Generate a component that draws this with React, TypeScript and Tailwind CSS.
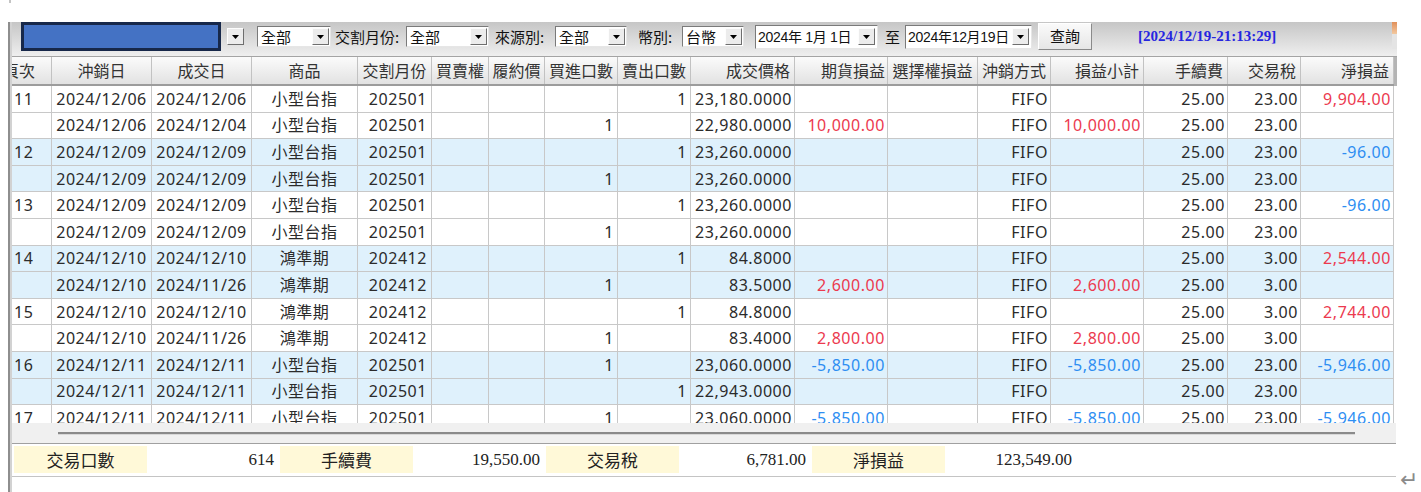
import React from 'react';

const COLS =
  'grid grid-cols-[40px_100px_100px_106px_74px_57px_56px_73px_73px_104px_93px_90px_73px_93px_84px_73px_93px]';

type Cell = { t: string; c?: 'r' | 'b' };
const R = (t: string): Cell => ({ t, c: 'r' });
const B = (t: string): Cell => ({ t, c: 'b' });
const N = (t: string): Cell => ({ t });

type Row = Cell[];

const rows: Row[] = [
  [N('11'), N('2024/12/06'), N('2024/12/06'), N('小型台指'), N('202501'), N(''), N(''), N(''), N('1'), N('23,180.0000'), N(''), N(''), N('FIFO'), N(''), N('25.00'), N('23.00'), R('9,904.00')],
  [N(''), N('2024/12/06'), N('2024/12/04'), N('小型台指'), N('202501'), N(''), N(''), N('1'), N(''), N('22,980.0000'), R('10,000.00'), N(''), N('FIFO'), R('10,000.00'), N('25.00'), N('23.00'), N('')],
  [N('12'), N('2024/12/09'), N('2024/12/09'), N('小型台指'), N('202501'), N(''), N(''), N(''), N('1'), N('23,260.0000'), N(''), N(''), N('FIFO'), N(''), N('25.00'), N('23.00'), B('-96.00')],
  [N(''), N('2024/12/09'), N('2024/12/09'), N('小型台指'), N('202501'), N(''), N(''), N('1'), N(''), N('23,260.0000'), N(''), N(''), N('FIFO'), N(''), N('25.00'), N('23.00'), N('')],
  [N('13'), N('2024/12/09'), N('2024/12/09'), N('小型台指'), N('202501'), N(''), N(''), N(''), N('1'), N('23,260.0000'), N(''), N(''), N('FIFO'), N(''), N('25.00'), N('23.00'), B('-96.00')],
  [N(''), N('2024/12/09'), N('2024/12/09'), N('小型台指'), N('202501'), N(''), N(''), N('1'), N(''), N('23,260.0000'), N(''), N(''), N('FIFO'), N(''), N('25.00'), N('23.00'), N('')],
  [N('14'), N('2024/12/10'), N('2024/12/10'), N('鴻準期'), N('202412'), N(''), N(''), N(''), N('1'), N('84.8000'), N(''), N(''), N('FIFO'), N(''), N('25.00'), N('3.00'), R('2,544.00')],
  [N(''), N('2024/12/10'), N('2024/11/26'), N('鴻準期'), N('202412'), N(''), N(''), N('1'), N(''), N('83.5000'), R('2,600.00'), N(''), N('FIFO'), R('2,600.00'), N('25.00'), N('3.00'), N('')],
  [N('15'), N('2024/12/10'), N('2024/12/10'), N('鴻準期'), N('202412'), N(''), N(''), N(''), N('1'), N('84.8000'), N(''), N(''), N('FIFO'), N(''), N('25.00'), N('3.00'), R('2,744.00')],
  [N(''), N('2024/12/10'), N('2024/11/26'), N('鴻準期'), N('202412'), N(''), N(''), N('1'), N(''), N('83.4000'), R('2,800.00'), N(''), N('FIFO'), R('2,800.00'), N('25.00'), N('3.00'), N('')],
  [N('16'), N('2024/12/11'), N('2024/12/11'), N('小型台指'), N('202501'), N(''), N(''), N('1'), N(''), N('23,060.0000'), B('-5,850.00'), N(''), N('FIFO'), B('-5,850.00'), N('25.00'), N('23.00'), B('-5,946.00')],
  [N(''), N('2024/12/11'), N('2024/12/11'), N('小型台指'), N('202501'), N(''), N(''), N(''), N('1'), N('22,943.0000'), N(''), N(''), N('FIFO'), N(''), N('25.00'), N('23.00'), N('')],
  [N('17'), N('2024/12/11'), N('2024/12/11'), N('小型台指'), N('202501'), N(''), N(''), N('1'), N(''), N('23,060.0000'), B('-5,850.00'), N(''), N('FIFO'), B('-5,850.00'), N('25.00'), N('23.00'), B('-5,946.00')],
];

const dataAlign = [
  'justify-start pl-[2px]',
  'justify-center',
  'justify-center',
  'justify-center',
  'justify-end pr-[4px]',
  'justify-end pr-[3px]',
  'justify-end pr-[3px]',
  'justify-end pr-[3px]',
  'justify-end pr-[3px]',
  'justify-end pr-[2px]',
  'justify-end pr-[2px]',
  'justify-end pr-[2px]',
  'justify-end pr-[2px]',
  'justify-end pr-[2px]',
  'justify-end pr-[2px]',
  'justify-end pr-[2px]',
  'justify-end pr-[2px]',
];

const headers: { t: string; a: string }[] = [
  { t: '頁次', a: 'justify-start' },
  { t: '沖銷日', a: 'justify-center' },
  { t: '成交日', a: 'justify-center' },
  { t: '商品', a: 'justify-center' },
  { t: '交割月份', a: 'justify-center' },
  { t: '買賣權', a: 'justify-center' },
  { t: '履約價', a: 'justify-center' },
  { t: '買進口數', a: 'justify-center' },
  { t: '賣出口數', a: 'justify-center' },
  { t: '成交價格', a: 'justify-end pr-[4px]' },
  { t: '期貨損益', a: 'justify-end pr-[2px]' },
  { t: '選擇權損益', a: 'justify-center' },
  { t: '沖銷方式', a: 'justify-center' },
  { t: '損益小計', a: 'justify-end pr-[4px]' },
  { t: '手續費', a: 'justify-end pr-[4px]' },
  { t: '交易稅', a: 'justify-end pr-[4px]' },
  { t: '淨損益', a: 'justify-end pr-[4px]' },
];

const Arrow = () => (
  <svg width="7" height="4" viewBox="0 0 7 4">
    <path d="M0 0H7L3.5 4Z" fill="#000" />
  </svg>
);

const DropBtn = () => (
  <div className="flex h-[17px] w-[17px] items-center justify-center border border-b-[#6e6e6e] border-l-[#fdfdfd] border-r-[#6e6e6e] border-t-[#fdfdfd] bg-[#ececec]">
    <Arrow />
  </div>
);

function Select({ w, text }: { w: string; text: string }) {
  return (
    <div
      className={`flex h-[21px] items-center justify-between border border-b-[#e6e6e6] border-l-[#7a7a7a] border-r-[#e6e6e6] border-t-[#7a7a7a] bg-white pl-[3px] pr-[1px] ${w}`}
    >
      <span className="text-[15px] leading-none text-[#111]">{text}</span>
      <DropBtn />
    </div>
  );
}

function DateBox({ w, text }: { w: string; text: string }) {
  return (
    <div
      className={`flex h-[24px] items-center justify-between border border-b-[#e6e6e6] border-l-[#7a7a7a] border-r-[#e6e6e6] border-t-[#7a7a7a] bg-white pl-[2px] pr-[2px] ${w}`}
    >
      <span
        className="whitespace-pre text-[14px] leading-none tracking-[-0.3px] text-[#111]"
        style={{ fontFamily: '"Liberation Sans", "Noto Sans CJK TC", sans-serif' }}
      >
        {text}
      </span>
      <DropBtn />
    </div>
  );
}

export default function App() {
  return (
    <div
      className="relative h-[492px] w-[1421px] overflow-hidden bg-white text-[#2b2b2b]"
      style={{ fontFamily: '"Noto Sans", "Noto Sans CJK TC", sans-serif' }}
    >
      <div className="h-[22px]">
        <div className="ml-[9px] h-[3px] w-[2px] bg-[#c4c4c4]" />
      </div>
      <div className="flex h-[470px]">
        <div className="w-[8px]" />
        <div className="flex w-[1389px]">
          <div className="w-[4px] border-l-2 border-[#8e8e8e] bg-[#d2d2d2]" />
          <div className="flex w-[1385px] flex-col">
            {/* Toolbar */}
            <div
              className="flex h-[35px] items-center border-b border-[#a4a4a4] bg-gradient-to-b from-[#c6c6c6] to-[#efefef] pb-[5px] pl-[9px]"
              style={{ fontFamily: '"Noto Sans CJK TC", sans-serif' }}
            >
              <div className="h-[29px] w-[200px] border-[3px] border-[#17284a] bg-[#4472c4]" />
              <div className="ml-[6px]">
                <DropBtn />
              </div>
              <div className="ml-[13px]">
                <Select w="w-[74px]" text="全部" />
              </div>
              <div className="w-[75px] pl-[4px] text-[15px] leading-none text-[#111]">交割月份:</div>
              <Select w="w-[83px]" text="全部" />
              <div className="w-[66px] pl-[6px] text-[15px] leading-none text-[#111]">來源別:</div>
              <Select w="w-[72px]" text="全部" />
              <div className="w-[55px] pl-[11px] text-[15px] leading-none text-[#111]">幣別:</div>
              <Select w="w-[62px]" text="台幣" />
              <div className="ml-[11px]">
                <DateBox w="w-[123px]" text="2024年 1月 1日" />
              </div>
              <div className="w-[27px] pl-[7px] text-[15px] leading-none text-[#111]">至</div>
              <DateBox w="w-[127px]" text="2024年12月19日" />
              <div className="ml-[6px] flex h-[27px] w-[54px] items-center justify-center border border-b-[#8a8a8a] border-l-[#ffffff] border-r-[#8a8a8a] border-t-[#ffffff] bg-gradient-to-b from-[#fafafa] to-[#e6e6e6] text-[15px] text-[#111]">
                查詢
              </div>
              <div
                className="ml-[46px] text-[15px] font-bold leading-none text-[#2626e0]"
                style={{ fontFamily: '"Liberation Serif", serif' }}
              >
                [2024/12/19-21:13:29]
              </div>
              <div className="ml-auto flex h-[27px] w-[5px] flex-col self-start">
                <div className="h-[12px] bg-gradient-to-b from-[#e0905a] to-[#f2c9a0]" />
                <div className="flex-1 bg-[#e4e4e4]" />
              </div>
            </div>

            {/* Header */}
            <div className="flex h-[29px]">
              <div className={`${COLS} h-[29px] w-[1382px] border-b-2 border-[#9c9c9c] bg-gradient-to-b from-[#fbfbfb] to-[#e2e2e2]`}>
                {headers.map((h, i) => (
                  <div
                    key={i}
                    className={`flex items-center overflow-hidden whitespace-nowrap border-r border-[#c2c2c2] text-[16px] leading-none text-[#333] ${h.a}`}
                  >
                    <span className={i === 0 ? '-ml-[9px]' : ''}>{h.t}</span>
                  </div>
                ))}
              </div>
              <div className="w-[3px] bg-[#b4b4b4]" />
            </div>

            {/* Body */}
            <div className="h-[337px] overflow-hidden">
              {rows.map((r, ri) => {
                const blue = Math.floor(ri / 2) % 2 === 1;
                return (
                  <div
                    key={ri}
                    className={`${COLS} h-[26.6px] w-[1382px] ${blue ? 'bg-[#dff1fc]' : 'bg-white'}`}
                  >
                    {r.map((c, ci) => (
                      <div
                        key={ci}
                        className={`flex items-center overflow-hidden whitespace-nowrap border-b border-r border-[#c8c8c8] text-[16px] leading-none tracking-[0.55px] ${dataAlign[ci]} ${
                          c.c === 'r' ? 'text-[#ec3a4f]' : c.c === 'b' ? 'text-[#2e8ef2]' : 'text-[#2b2b2b]'
                        }`}
                      >
                        {c.t}
                      </div>
                    ))}
                  </div>
                );
              })}
            </div>

            {/* Scrollbar */}
            <div className="h-[20px] w-[1384px] bg-[#f0f0f0] pl-[46px] pt-[9px]">
              <div className="h-[3px] w-[1297px] border-b border-[#d8d8d8] bg-[#8a8a8a]" />
            </div>

            {/* Summary */}
            <div className="h-[34px] w-[1384px] border-b border-t border-b-[#c4c4c4] border-t-[#a0a0a0] bg-white pl-[2px] pt-[2px]">
              <div className="grid h-[27px] w-[1064px] grid-cols-[133px_133px_133px_133px_133px_133px_133px_133px] text-[16px] leading-none text-[#222]">
                {[
                  ['交易口數', '614'],
                  ['手續費', '19,550.00'],
                  ['交易稅', '6,781.00'],
                  ['淨損益', '123,549.00'],
                ].map(([l, v], i) => (
                  <React.Fragment key={i}>
                    <div
                      className="flex items-center justify-center bg-[#fff9d8] text-[17px]"
                      style={{ fontFamily: '"Noto Sans CJK TC", sans-serif' }}
                    >
                      {l}
                    </div>
                    <div
                      className="flex items-center justify-end bg-white pr-[6px] text-[17px]"
                      style={{ fontFamily: '"Liberation Serif", serif' }}
                    >
                      {v}
                    </div>
                  </React.Fragment>
                ))}
              </div>
            </div>

            {/* Bottom white area */}
            <div className="h-[15px] bg-white" />
          </div>
        </div>
        <div className="flex flex-1 items-end justify-center pb-[3px] text-[22px] leading-none text-[#8a8a8a]">
          ↵
        </div>
      </div>
    </div>
  );
}
